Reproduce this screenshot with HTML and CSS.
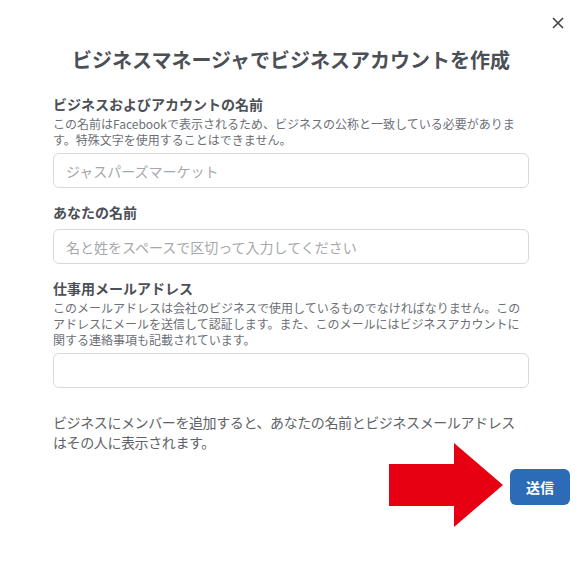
FILE: index.html
```html
<!DOCTYPE html>
<html lang="ja">
<head>
<meta charset="utf-8">
<title>ビジネスアカウントを作成</title>
<link rel="stylesheet" href="styles.css">
</head>
<body>
<div class="dialog">
  <button class="close" aria-label="閉じる">
    <svg width="12" height="12" viewBox="0 0 12 12"><path d="M1 1 L11 11 M11 1 L1 11" stroke="#444" stroke-width="1.6" fill="none"/></svg>
  </button>
  <div class="content">
    <h1 class="title">ビジネスマネージャでビジネスアカウントを作成</h1>
    <div class="field">
      <div class="label">ビジネスおよびアカウントの名前</div>
      <div class="desc">この名前はFacebookで表示されるため、ビジネスの公称と一致している必要がありま<br>す。特殊文字を使用することはできません。</div>
      <input class="input" type="text" placeholder="ジャスパーズマーケット">
    </div>
    <div class="field">
      <div class="label">あなたの名前</div>
      <input class="input" type="text" placeholder="名と姓をスペースで区切って入力してください">
    </div>
    <div class="field">
      <div class="label">仕事用メールアドレス</div>
      <div class="desc">このメールアドレスは会社のビジネスで使用しているものでなければなりません。この<br>アドレスにメールを送信して認証します。また、このメールにはビジネスアカウントに<br>関する連絡事項も記載されています。</div>
      <input class="input" type="text">
    </div>
    <p class="note">ビジネスにメンバーを追加すると、あなたの名前とビジネスメールアドレス<br>はその人に表示されます。</p>
  </div>
  <div class="actions">
    <svg class="arrow" width="114" height="84" viewBox="0 0 114 84"><polygon points="0,21 65,21 65,0 114,42 65,84 65,63 0,63" fill="#e60012"/></svg>
    <button class="submit">送信</button>
  </div>
</div>
</body>
</html>
```
FILE: styles.css
```css
* { box-sizing: border-box; }
html, body { margin: 0; padding: 0; background: #fff; }
body {
  font-family: "Noto Sans CJK JP", "Noto Sans", sans-serif;
  color: #4b4f56;
}
.dialog {
  position: relative;
  width: 577px;
  min-height: 574px;
  padding-top: 48px;
}
.close {
  position: absolute;
  left: 552px;
  top: 17px;
  width: 12px;
  height: 12px;
  padding: 0;
  border: 0;
  background: none;
  display: flex;
}
.content {
  padding: 0 48px 0 53px;
}
.title {
  margin: 0;
  font-size: 20px;
  line-height: 24px;
  font-weight: 700;
  text-align: center;
  color: #4b4f56;
}
.field {
  display: flex;
  flex-direction: column;
}
.field + .field { margin-top: 15px; }
.title + .field { margin-top: 23px; }
.label {
  font-size: 14px;
  line-height: 18px;
  font-weight: 700;
  color: #4b4f56;
  margin-bottom: 3px;
}
.desc {
  font-size: 12px;
  line-height: 16px;
  color: #6b6f76;
  white-space: nowrap;
}
.input {
  margin-top: 5px;
  width: 476px;
  height: 35px;
  border: 1px solid #d6d9dd;
  border-radius: 6px;
  padding: 0 12px;
  font-family: inherit;
  font-size: 14px;
  color: #333;
  outline: none;
}
.input::placeholder { color: #a6a8ab; }
.note {
  margin: 24px 0 0;
  font-size: 14px;
  line-height: 20px;
  letter-spacing: -0.4px;
  color: #5f6368;
  white-space: nowrap;
}
.actions {
  position: relative;
  display: flex;
  justify-content: flex-end;
  margin-top: 17px;
  padding-right: 7px;
}
.arrow {
  position: absolute;
  right: 74px;
  top: -26px;
}
.submit {
  width: 60px;
  height: 36px;
  border: 0;
  border-radius: 6px;
  background: #2c6bb5;
  color: #fff;
  font-family: inherit;
  font-size: 14px;
  font-weight: 700;
  padding: 0;
}
```
